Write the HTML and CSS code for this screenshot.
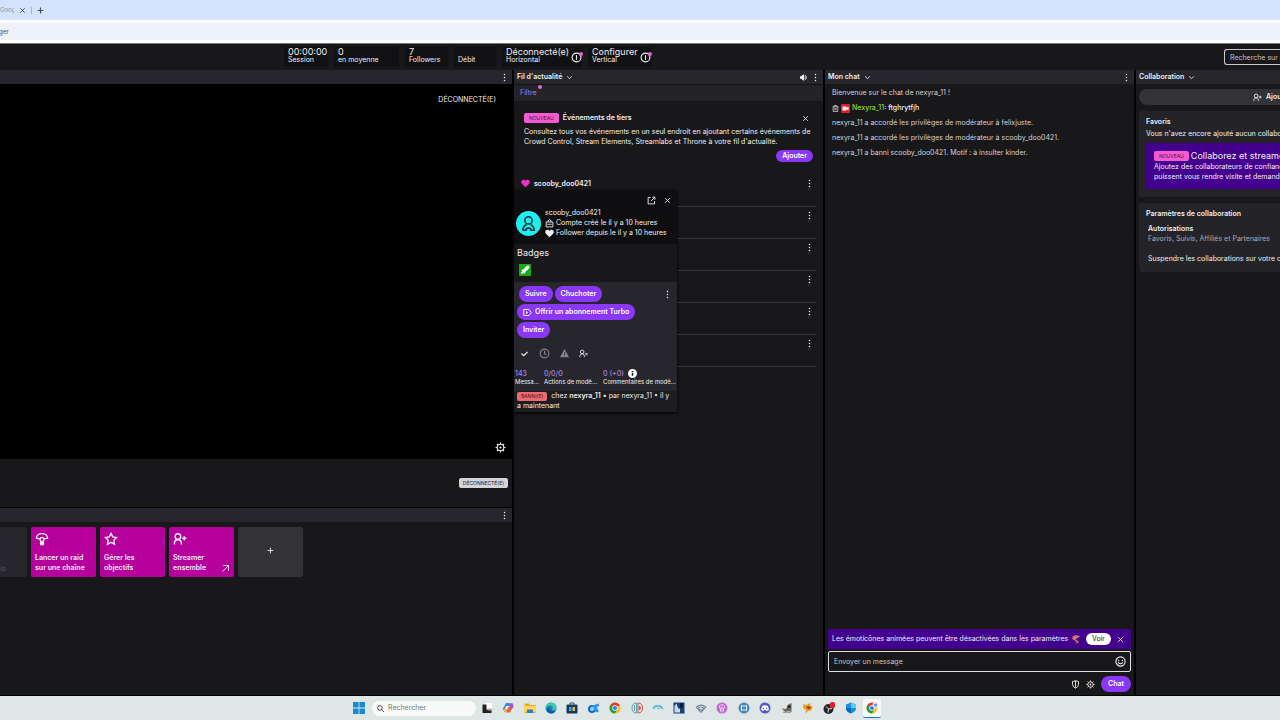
FILE: index.html
```html
<!DOCTYPE html>
<html lang="fr">

<head>
    <meta charset="utf-8">
    <title>Gestionnaire de stream</title>
    <link rel="stylesheet" href="styles.css">
</head>

<body>
    <!-- shared icons -->
    <svg class="sprite" xmlns="http://www.w3.org/2000/svg">
        <symbol id="dots" viewBox="0 0 12 12"><circle cx="6" cy="2" r="1" /><circle cx="6" cy="6" r="1" /><circle cx="6" cy="10" r="1" /></symbol>
        <symbol id="chevron" viewBox="0 0 12 12"><path d="M2 4l4 4 4-4" class="bold-s" /></symbol>
        <symbol id="close" viewBox="0 0 12 12"><path d="M2 2l8 8M10 2l-8 8" class="bold-s" /></symbol>
        <symbol id="info" viewBox="0 0 12 12"><circle cx="6" cy="6" r="4.800" class="line" /><path d="M6 3.500v5" class="line" /></symbol>
        <symbol id="gear" viewBox="0 0 20 20"><circle cx="10" cy="10" r="6" class="bold" /><circle cx="10" cy="10" r="2" /><path d="M10 1v3M10 16v3M1 10h3M16 10h3M3.600 3.600l2 2M14.400 14.400l2 2M3.600 16.400l2-2M14.400 5.600l2-2" class="bold" /></symbol>
        <symbol id="heart" viewBox="0 0 12 12"><path d="M6 11L1.200 6.200C-.8 3.500 1 1 3.200 1 4.600 1 5.500 1.800 6 2.600 6.500 1.800 7.400 1 8.800 1 11 1 12.800 3.500 10.800 6.200z" /></symbol>
        <symbol id="person-plus" viewBox="0 0 20 18"><circle cx="7" cy="5.500" r="4" class="bold" /><path d="M2 17v-2c0-3 2-5 5-5s5 2 5 5v2M13 8h6M16 5v6" class="bold" /></symbol>
        <symbol id="person-x" viewBox="0 0 20 18"><circle cx="7" cy="5.500" r="4" class="bold" /><path d="M2 17v-2c0-3 2-5 5-5s5 2 5 5v2M14 8l5 5M19 8l-5 5" class="bold" /></symbol>
        <symbol id="chrome" viewBox="0 0 24 24"><circle cx="12" cy="12" r="11" fill="#fbc116" /><path d="M12 12L2.500 6.500A11 11 0 0 1 21.500 6.500z" fill="#e33b2e" /><path d="M12 12L2.500 6.500A11 11 0 0 0 12 23l4.500-8z" fill="#229a4b" /><circle cx="12" cy="12" r="5.500" fill="#fff" /><circle cx="12" cy="12" r="4.200" fill="#3b7ded" /></symbol>
    </svg>

    <div class="browser">
        <div class="tabs">
            <span class="tab-name">Goog</span>
            <button class="tab-button" aria-label="Fermer l'onglet"><svg class="icon-s"><use href="#close" /></svg></button>
            <span class="tab-sep"></span>
            <button class="tab-button" aria-label="Nouvel onglet"><svg class="icon-s" viewBox="0 0 12 12"><path d="M6 1v10M1 6h10" class="bold" /></svg></button>
        </div>
        <div class="address"><span class="address-text">ager</span></div>
    </div>

    <div class="app">
        <header class="topbar">
            <div class="stat session"><b>00:00:00</b><span>Session</span></div>
            <div class="stat average"><b>0</b><span>en moyenne</span></div>
            <div class="stat followers"><b>7</b><span>Followers</span></div>
            <div class="stat bitrate"><b></b><span>Débit</span></div>
            <div class="stat status horizontal">
                <div><b>Déconnecté(e)</b><span>Horizontal</span></div>
                <i class="notice"><svg class="icon-l"><use href="#info" /></svg></i>
            </div>
            <div class="stat status vertical">
                <div><b>Configurer</b><span>Vertical</span></div>
                <i class="notice"><svg class="icon-l"><use href="#info" /></svg></i>
            </div>
            <input class="search" type="text" aria-label="Recherche" placeholder="Recherche sur le site">
        </header>

        <main class="columns">
            <section class="column">
                <div class="column-head">
                    <button class="icon-button push" aria-label="Options"><svg class="icon-m"><use href="#dots" /></svg></button>
                </div>
                <div class="video">
                    <span class="video-status">DÉCONNECTÉ(E)</span>
                    <button class="icon-button" aria-label="Paramètres"><svg class="icon-l"><use href="#gear" /></svg></button>
                </div>
                <div class="stream-info"><span class="offline">DÉCONNECTÉ(E)</span></div>
                <div class="quick">
                    <div class="column-head">
                        <button class="icon-button push" aria-label="Options"><svg class="icon-m"><use href="#dots" /></svg></button>
                    </div>
                    <div class="tiles">
                        <button class="tile tile-off" disabled>Clip</button>
                        <button class="tile">
                            <svg class="tile-icon" viewBox="0 0 20 20"><path d="M2 9c0-9 16-9 16 0l-5 1c-1-3-5-3-6 0zM7 10l1.500 4M13 10l-1.500 4" class="bold" /><path d="M7 13h6v6H7z" /></svg>
                            Lancer un raid<br>sur une chaîne
                        </button>
                        <button class="tile">
                            <svg class="tile-icon" viewBox="0 0 20 20"><path d="M10 2l2.500 5 5.500.8-4 4 1 5.700-5-2.700-5 2.700 1-5.700-4-4L7.500 7z" class="bold" /></svg>
                            Gérer les<br>objectifs
                        </button>
                        <button class="tile">
                            <svg class="tile-icon"><use href="#person-plus" /></svg>
                            Streamer<br>ensemble
                            <svg class="tile-arrow" viewBox="0 0 12 12"><path d="M2 10l8-8M3 2h7v7" class="line" /></svg>
                        </button>
                        <button class="tile tile-add" aria-label="Ajouter"><svg class="icon-s" viewBox="0 0 12 12"><path d="M6 1v10M1 6h10" class="bold-s" /></svg></button>
                    </div>
                </div>
            </section>

            <section class="column feed">
                <div class="column-head">
                    <h2>Fil d'actualité</h2>
                    <svg class="icon-s"><use href="#chevron" /></svg>
                    <button class="icon-button push" aria-label="Son"><svg class="icon-s" viewBox="0 0 12 12"><path d="M0 4h2l5-4v12L2 8H0z" /><path d="M8.500 4q1.500 2 0 4M9.500 2q3 4 0 8" class="bold-s" /></svg></button>
                    <button class="icon-button" aria-label="Options"><svg class="icon-m"><use href="#dots" /></svg></button>
                </div>
                <div class="filter"><a href="#" class="filter-link">Filtre</a></div>
                <article class="promo">
                    <div class="promo-head">
                        <span class="new">NOUVEAU</span>
                        <h3>Événements de tiers</h3>
                        <button class="icon-button push" aria-label="Fermer"><svg class="icon-s"><use href="#close" /></svg></button>
                    </div>
                    <p>Consultez tous vos événements en un seul endroit en ajoutant certains événements de Crowd Control, Stream Elements, Streamlabs et Throne à votre fil d'actualité.</p>
                    <button class="pill promo-add">Ajouter</button>
                </article>
                <ul class="events">
                    <li><svg class="icon-m pink"><use href="#heart" /></svg><b>scooby_doo0421</b><button class="icon-button push" aria-label="Options"><svg class="icon-m"><use href="#dots" /></svg></button></li>
                    <li><button class="icon-button push" aria-label="Options"><svg class="icon-m"><use href="#dots" /></svg></button></li>
                    <li><button class="icon-button push" aria-label="Options"><svg class="icon-m"><use href="#dots" /></svg></button></li>
                    <li><button class="icon-button push" aria-label="Options"><svg class="icon-m"><use href="#dots" /></svg></button></li>
                    <li><button class="icon-button push" aria-label="Options"><svg class="icon-m"><use href="#dots" /></svg></button></li>
                    <li><button class="icon-button push" aria-label="Options"><svg class="icon-m"><use href="#dots" /></svg></button></li>
                </ul>

                <div class="card">
                    <div class="card-top">
                        <div class="card-tools">
                            <button class="icon-button" aria-label="Détacher"><svg class="icon-m" viewBox="0 0 12 12"><path d="M5 2H1.500v8.500H10V7M5 7l5.500-5.500M7 1.500h3.500V5" class="line" /></svg></button>
                            <button class="icon-button" aria-label="Fermer"><svg class="icon-s"><use href="#close" /></svg></button>
                        </div>
                        <div class="card-user">
                            <svg class="avatar" viewBox="0 0 24 24"><circle cx="12" cy="12" r="12" fill="#1eeeee" /><g fill="none" stroke="#123438" stroke-width="1.500"><circle cx="12" cy="9" r="3.500" /><path d="M6.500 18.500h3c0-3 5-3 5 0h3c0-2-1-4-3.500-5.500M6.500 18.500c0-2 1-4 3.500-5.500" /></g></svg>
                            <div>
                                <b>scooby_doo0421</b>
                                <span><svg class="icon-m" viewBox="0 0 12 12"><path d="M1.500 4h9v6.500h-9zM4 4V2q2-2 4 0v2M3 7h6" class="line" /></svg>Compte créé le il y a 10 heures</span>
                                <span><svg class="icon-m"><use href="#heart" /></svg>Follower depuis le il y a 10 heures</span>
                            </div>
                        </div>
                    </div>
                    <div class="badges">
                        <h3>Badges</h3>
                        <svg class="badge" viewBox="0 0 18 18"><rect width="18" height="18" rx="1" fill="#12ad12" /><path d="M15.500 2.500v4L9 12l1 1-1.500 1.500L7 13l-2.500 2.500-2-2L5 11l-1.500-1.500L5 8l1 1 5.500-6.500z" fill="#fff" /></svg>
                    </div>
                    <div class="card-actions">
                        <div class="pills">
                            <button class="pill indent">Suivre</button>
                            <button class="pill">Chuchoter</button>
                            <button class="icon-button push" aria-label="Options"><svg class="icon-m"><use href="#dots" /></svg></button>
                        </div>
                        <button class="pill"><svg class="icon-m" viewBox="0 0 12 12"><path d="M1 2h7l3 4-3 4H1z" class="line" /><path d="M4 4v4l3-2z" /></svg>Offrir un abonnement Turbo</button>
                        <button class="pill">Inviter</button>
                        <div class="mod-icons">
                            <button class="icon-button" aria-label="Débannir"><svg class="icon-m" viewBox="0 0 12 12"><path d="M2 6l3 3 5-5" class="bold-s" /></svg></button>
                            <button class="icon-button dim" aria-label="Exclure"><svg class="icon-l" viewBox="0 0 12 12"><circle cx="6" cy="6" r="4.800" class="line" /><path d="M6 3v3l2 1.500" class="line" /></svg></button>
                            <button class="icon-button dim" aria-label="Avertir"><svg class="icon-m" viewBox="0 0 12 12"><path fill-rule="evenodd" d="M6 0l6 11H0zM5.500 4v4h1V4zM5.500 9v1h1V9z" /></svg></button>
                            <button class="icon-button" aria-label="Bloquer"><svg class="icon-m"><use href="#person-x" /></svg></button>
                        </div>
                        <div class="counts">
                            <div><a href="#">143</a><span>Messages</span></div>
                            <div><a href="#">0/0/0</a><span>Actions de modération</span></div>
                            <div><a href="#">0 (+0)<svg class="round-info" viewBox="0 0 12 12"><circle cx="6" cy="6" r="6" fill="#fff" /><path d="M5 2.500h2v1.500H5zM5 5h2v4H5z" fill="#18181b" /></svg></a><span>Commentaires de modération</span></div>
                        </div>
                        <p class="ban"><span class="banned">BANNI(E)</span>chez <b>nexyra_11</b> • par nexyra_11 • il y a maintenant</p>
                    </div>
                </div>
            </section>

            <section class="column chat">
                <div class="column-head">
                    <h2>Mon chat</h2>
                    <svg class="icon-s"><use href="#chevron" /></svg>
                    <button class="icon-button push" aria-label="Options"><svg class="icon-m"><use href="#dots" /></svg></button>
                </div>
                <div class="messages">
                    <p>Bienvenue sur le chat de nexyra_11 !</p>
                    <p class="message">
                        <svg class="icon-s" viewBox="0 0 12 12"><path d="M1 3h10M4 3V1h4v2M2 3v8h8V3M5 5v4M7 5v4" class="line" /></svg>
                        <svg class="host" viewBox="0 0 18 18"><rect width="18" height="18" rx="2" fill="#e9192d" /><path d="M3 5h8v3l4-3v8l-4-3v3H3z" fill="#fff" /></svg>
                        <span><b class="green">Nexyra_11</b>: ftghrytfjh</span>
                    </p>
                    <p>nexyra_11 a accordé les privilèges de modérateur à felixjuste.</p>
                    <p>nexyra_11 a accordé les privilèges de modérateur à scooby_doo0421.</p>
                    <p>nexyra_11 a banni scooby_doo0421. Motif : à insulter kinder.</p>
                </div>
                <div class="compose">
                    <div class="tip">
                        <span>Les émoticônes animées peuvent être désactivées dans les paramètres</span>
                        <svg class="icon-m" viewBox="0 0 12 12"><path d="M2 3q4-3 8-1L7 4 5 3v3l4 3-2 2M4 6l-2-2" fill="none" stroke="#d98463" stroke-width="2" /><path d="M6 8l2 3" stroke="#8d432c" stroke-width="2" /></svg>
                        <button class="see">Voir</button>
                        <button class="icon-button" aria-label="Fermer"><svg class="icon-s"><use href="#close" /></svg></button>
                    </div>
                    <div class="field">
                        <input type="text" aria-label="Message" placeholder="Envoyer un message">
                        <button class="icon-button" aria-label="Émoticônes"><svg class="icon-l" viewBox="0 0 12 12"><circle cx="6" cy="6" r="5" class="line" /><circle cx="4" cy="5" r=".8" /><circle cx="8" cy="5" r=".8" /><path d="M3.500 7q2.500 3 5 0" class="line" /></svg></button>
                    </div>
                    <div class="chat-buttons">
                        <button class="icon-button" aria-label="Modération"><svg class="icon-m" viewBox="0 0 12 12"><path d="M6 1L2 2v4q0 3 4 5 4-2 4-5V2zM6 1v9" class="line" /></svg></button>
                        <button class="icon-button" aria-label="Paramètres du chat"><svg class="icon-m"><use href="#gear" /></svg></button>
                        <button class="pill send">Chat</button>
                    </div>
                </div>
            </section>

            <section class="column collab">
                <div class="column-head">
                    <h2>Collaboration</h2>
                    <svg class="icon-s"><use href="#chevron" /></svg>
                </div>
                <div class="collab-body">
                    <button class="add-friend"><svg class="icon-m"><use href="#person-plus" /></svg>Ajouter</button>
                    <div class="box favorites">
                        <h3>Favoris</h3>
                        <p>Vous n'avez encore ajouté aucun collaborateur</p>
                        <div class="banner">
                            <div><span class="new">NOUVEAU</span><b>Collaborez et streamez</b></div>
                            <p>Ajoutez des collaborateurs de confiance qui<br>puissent vous rendre visite et demander à</p>
                        </div>
                    </div>
                    <div class="box settings">
                        <h3>Paramètres de collaboration</h3>
                        <h4>Autorisations</h4>
                        <p class="muted">Favoris, Suivis, Affiliés et Partenaires</p>
                        <p class="suspend">Suspendre les collaborations sur votre chaîne</p>
                    </div>
                </div>
            </section>
        </main>
    </div>

    <footer class="taskbar">
        <button class="start" aria-label="Démarrer"><svg viewBox="0 0 12 12"><path d="M0 0h5.600v5.600H0zM6.400 0H12v5.600H6.400zM0 6.400h5.600V12H0zM6.400 6.400H12V12H6.400z" fill="#168bd2" /></svg></button>
        <div class="task-search">
            <svg class="icon-s" viewBox="0 0 12 12"><circle cx="5" cy="5" r="4" class="bold-s" /><path d="M8 8l4 4" class="bold-s" /></svg>
            <input type="text" aria-label="Rechercher" placeholder="Rechercher">
        </div>
        <div class="apps">
            <svg viewBox="0 0 24 24"><path d="M8 2h14v14H8z" fill="#fff" /><path d="M3 5h8v10h10v7H3z" fill="#222" /><path d="M13 13h8v4h-8z" fill="#aaa" /></svg>
            <svg viewBox="0 0 24 24"><path d="M8 2h7l2 6H8l-3 8-4-1z" fill="#2e8fd8" /><path d="M16 3h5l2 7-5 6h-4z" fill="#db4e96" /><path d="M3 14h8l-2 7-5-1z" fill="#eeb13b" /><path d="M10 17l3-7h8l-5 11H9z" fill="#e9594f" /><path d="M15 3h6l2 6-4 5z" fill="#9c53d5" /></svg>
            <svg viewBox="0 0 24 24"><path d="M1 3h9l2 3h11v16H1z" fill="#e9a71c" /><path d="M1 8h22v12H1z" fill="#ffd75b" /><path d="M6 15h12v7H6z" fill="#2782cb" /></svg>
            <svg viewBox="0 0 24 24"><circle cx="12" cy="12" r="11" fill="#167ac6" /><path d="M2 8C6-2 23-1 23 12q-1 6-9 4 4-9-4-9-5 0-8 6z" fill="#40c7a3" /><path d="M9 11q-3 9 12 8-8 8-16 0-3-7 4-8z" fill="#1054a7" /></svg>
            <svg viewBox="0 0 24 24"><path d="M8 5V2h8v3" fill="none" stroke="#274c6d" stroke-width="2" /><rect x="1" y="5" width="22" height="18" rx="2" fill="#173955" /><path d="M6 10h5v8H6z" fill="#36a7e9" /><path d="M13 10h5v8h-5z" fill="#e5ba42" /></svg>
            <svg viewBox="0 0 24 24"><circle cx="8" cy="14" r="8" fill="#1769bd" /><path d="M6 9l14-6 3 4-6 4 5 7-4 3-8-6z" fill="#2d93e2" /><circle cx="8" cy="14" r="4" fill="#8bd3fa" /></svg>
            <svg><use href="#chrome" /></svg>
            <svg viewBox="0 0 24 24" fill="none" stroke-width="2"><path d="M11 2v20Q2 22 2 12T11 2zM7 6v12" fill="none" stroke="#5d9daa" /><path d="M14 2v20q9 0 9-10T14 2zM17 8v8q4-4 0-8" fill="none" stroke="#d34f51" /></svg>
            <svg viewBox="0 0 24 24"><path d="M1 12Q6 4 13 7q6-2 10 8-6-3-10-1-4-4-8 0z" fill="#48afd0" /><path d="M5 12l7-2 7 3" fill="none" stroke="#d4f4fa" stroke-width="2" /></svg>
            <svg viewBox="0 0 24 24"><path d="M1 1h22v22H1z" fill="#163d80" /><path d="M3 21V8l4-5 3 9 4 2v7z" fill="#c7dcf1" /><path d="M14 3h6v8h-6z" fill="#08152e" /></svg>
            <svg viewBox="0 0 24 24"><path d="M1 10q11-10 22 0L12 22z" fill="#5b7189" /><path d="M4 11q8-6 16 0M7 14q5-4 10 0M12 10v9" fill="none" stroke="#dce8ef" stroke-width="2" /></svg>
            <svg viewBox="0 0 24 24"><circle cx="12" cy="12" r="11" fill="#bd69d1" /><path d="M6 13q0-8 6-8t6 8M9 19v-7q3-4 6 0v7M12 12v9" fill="none" stroke="#f3c7f4" stroke-width="2" /></svg>
            <svg viewBox="0 0 24 24"><circle cx="12" cy="12" r="11" fill="#4a88b6" /><path d="M7 6v12M17 6v12M6 8h12M6 16h12" stroke="#dceefa" stroke-width="2" /></svg>
            <svg viewBox="0 0 24 24"><circle cx="12" cy="12" r="11" fill="#5258c9" /><path d="M6 8q6-3 12 0l2 8-5 2-1-2h-4l-1 2-5-2z" fill="#fff" /><circle cx="9" cy="13" r="1.500" fill="#5258c9" /><circle cx="15" cy="13" r="1.500" fill="#5258c9" /></svg>
            <svg viewBox="0 0 24 24"><path d="M1 13l9 1 3-8 8-4v18l-7-2-4 3z" fill="#6c6861" /><path d="M14 7h5v5h-5z" fill="#282727" /><path d="M3 19h17v3H5z" fill="#a29c91" /></svg>
            <svg viewBox="0 0 24 24"><path d="M3 4l5 2 9-4-1 5 6 3-4 7-6 1-5 5 1-7-6-4z" fill="#f19a20" /><path d="M8 10l7-2 3 4-5 3z" fill="#914c17" /></svg>
            <svg viewBox="0 0 24 24"><circle cx="11" cy="14" r="10" fill="#25262a" /><path d="M11 14l-5-5M11 14l7-1M11 14l-1 7" stroke="#ddd" stroke-width="2" /><circle cx="19" cy="6" r="6" fill="#e21b35" /></svg>
            <svg viewBox="0 0 24 24"><path d="M12 1l10 4v7q0 7-10 11Q2 19 2 12V5z" fill="#168fdd" /><path d="M12 1l10 4v7H12z" fill="#63c6f3" /><path d="M12 12v11Q2 19 2 12z" fill="#0967b8" /></svg>
            <span class="current"><svg viewBox="0 0 24 24"><use href="#chrome" /><circle cx="19" cy="6" r="6" fill="#dce7fa" /><circle cx="19" cy="6" r="3" fill="#6688d8" /></svg></span>
        </div>
    </footer>
</body>

</html>
```
FILE: styles.css
```css
* {
    box-sizing: border-box;
}

body {
    margin: 0;
    height: 100vh;
    display: flex;
    flex-direction: column;
    overflow: hidden;
    background: #000;
    color: #efeff1;
    font: 7px/10px Inter, "Liberation Sans", sans-serif;
}

h2,
h3,
h4,
p,
ul {
    margin: 0;
    padding: 0;
    font-size: 7px;
}

button,
input {
    font: inherit;
    color: inherit;
    border: 0;
    padding: 0;
    background: none;
}

input {
    outline: 0;
    min-width: 0;
}

a {
    color: #a684e8;
    text-decoration: none;
}

svg {
    fill: currentColor;
    flex: none;
}

.sprite {
    display: none;
}

.line,
.bold,
.bold-s {
    fill: none;
    stroke: currentColor;
    stroke-width: 1.2;
}

.bold {
    stroke-width: 2;
}

.bold-s {
    stroke-width: 1.5;
}

.icon-s {
    width: 7px;
    height: 7px;
}

.icon-m {
    width: 9px;
    height: 9px;
}

.icon-l {
    width: 11px;
    height: 11px;
}

.icon-button {
    display: flex;
}

.push {
    margin-left: auto;
}

/* browser chrome */
.browser {
    flex: none;
    background: #fff;
    color: #4a4f57;
    border-bottom: 1px solid #777;
}

.tabs {
    height: 20px;
    display: flex;
    align-items: center;
    gap: 5px;
    background: #d3e3fd;
}

.tab-name {
    width: 14px;
    overflow: hidden;
    color: #8993a3;
    font-size: 6px;
}

.tab-button {
    display: flex;
}

.tab-sep {
    width: 1px;
    height: 7px;
    background: #a8b8d0;
}

.address {
    display: flex;
    align-items: center;
    height: 17px;
    margin: 3px 0;
    background: #edf2fa;
    font-size: 6px;
}

.address-text {
    margin-left: -4px;
}

/* top bar */
.app {
    flex: 1;
    min-height: 0;
    display: flex;
    flex-direction: column;
}

.topbar {
    height: 26px;
    flex: none;
    display: flex;
    align-items: center;
    gap: 6px;
    padding-left: 284px;
    background: #18181b;
}

.stat {
    height: 20px;
    padding: 0 4px;
    background: #111113;
    white-space: nowrap;
}

.stat b,
.stat span {
    display: block;
    height: 8px;
    line-height: 8px;
}

.stat b {
    font-size: 9px;
    font-weight: 400;
    height: 9px;
    line-height: 9px;
}

.session {
    width: 44px;
}

.average {
    width: 65px;
}

.followers {
    width: 43px;
}

.bitrate {
    width: 42px;
}

.status {
    display: flex;
    gap: 2px;
}

.horizontal {
    width: 80px;
}

.vertical {
    width: 64px;
}

.notice {
    position: relative;
    display: flex;
    align-self: center;
}

.notice::after,
.filter-link::after {
    content: "";
    position: absolute;
    top: 0;
    right: -1px;
    width: 4px;
    height: 4px;
    border-radius: 50%;
    background: #e765d6;
}

.filter-link::after {
    top: -3px;
}

.search {
    width: 56px;
    height: 16px;
    margin-left: auto;
    padding-left: 5px;
    border: 1px solid #c8c8cc;
    border-right: 0;
    border-radius: 3px 0 0 3px;
}

input::placeholder {
    color: #c4c4cc;
    opacity: 1;
}

/* columns */
.columns {
    flex: 1;
    min-height: 0;
    display: grid;
    grid-template-columns: minmax(0, 512fr) minmax(0, 309fr) minmax(0, 309fr) minmax(0, 144fr);
    gap: 2px;
    padding-bottom: 1px;
}

.column {
    position: relative;
    min-height: 0;
    display: flex;
    flex-direction: column;
    overflow: hidden;
    background: #18181b;
}

.column-head {
    height: 14px;
    flex: none;
    display: flex;
    align-items: center;
    gap: 4px;
    padding: 0 3px;
    background: #26262c;
}

.column-head h2 {
    font-weight: 600;
}

.video {
    flex: 1;
    display: flex;
    flex-direction: column;
    align-items: flex-end;
    justify-content: space-between;
    padding: 11px 6px 6px;
    background: #000;
}

.video-status {
    padding-right: 10px;
}

.stream-info {
    height: 48px;
    display: flex;
    align-items: center;
    justify-content: flex-end;
    padding-right: 4px;
}

.offline {
    padding: 0 4px;
    border-radius: 2px;
    background: #d3d3d9;
    color: #222;
    font-size: 5px;
}

.quick {
    height: 188px;
    border-top: 1px solid #000;
}

.tiles {
    display: flex;
    gap: 4px;
    margin: 5px 0 0 -38px;
}

.tile {
    position: relative;
    width: 65px;
    height: 50px;
    flex: none;
    padding: 5px 4px;
    border-radius: 2px;
    background: #b5009e;
    text-align: left;
    font-weight: 600;
}

.tile-icon {
    display: block;
    width: 14px;
    height: 14px;
    margin-bottom: 7px;
}

.tile-arrow {
    position: absolute;
    right: 4px;
    bottom: 4px;
    width: 9px;
    height: 9px;
}

.tile-off {
    padding: 33px 21px 0 0;
    background: #26262c;
    color: #515159;
    text-align: right;
    font-weight: 400;
}

.tile-add {
    background: #323237;
    text-align: center;
}

/* activity feed */
.filter {
    height: 17px;
    flex: none;
    padding: 3px 6px;
    background: #232328;
    border-top: 1px solid #111;
}

.filter-link {
    position: relative;
    padding-right: 4px;
}

.promo {
    margin: 8px 0 0;
    padding: 4px 10px 5px;
}

.promo-head {
    display: flex;
    align-items: center;
    gap: 4px;
    margin-bottom: 4px;
}

.promo-head h3 {
    font-weight: 600;
}

.promo-head .push {
    margin-right: 4px;
}

.new {
    padding: 0 5px;
    border-radius: 2px;
    background: #f45bd3;
    color: #4b1242;
    font-size: 5px;
}

.pill {
    display: flex;
    align-items: center;
    gap: 3px;
    width: max-content;
    height: 16px;
    padding: 0 6px;
    border-radius: 8px;
    background: #8a38f5;
    color: #fff;
    font-weight: 600;
}

.promo-add {
    height: 12px;
    margin: 3px 0 0 auto;
}

.events {
    list-style: none;
    margin: 8px 7px 0;
}

.events li {
    height: 32px;
    display: flex;
    align-items: flex-start;
    gap: 4px;
    padding: 4px 2px 0 0;
    border-bottom: 1px solid #35353b;
}

.events b {
    font-weight: 600;
}

.pink {
    color: #ed30c5;
}

/* user card floating above the feed */
.card {
    position: absolute;
    top: 120px;
    left: 0;
    width: 163px;
    background: #18181b;
    box-shadow: 0 1px 3px #000;
}

.card-top {
    height: 54px;
    padding: 6px 6px 0 2px;
    background: #0e0e10;
}

.card-tools {
    display: flex;
    align-items: center;
    justify-content: flex-end;
    gap: 8px;
}

.card-user {
    display: flex;
    align-items: center;
    gap: 4px;
    margin-top: 3px;
}

.card-user b,
.card-user span {
    display: flex;
    align-items: center;
    gap: 2px;
    font-weight: 400;
}

.avatar {
    width: 25px;
    height: 25px;
}

.badges {
    height: 38px;
    padding: 4px 3px;
}

.badges h3 {
    font-size: 9px;
    font-weight: 400;
}

.badge {
    width: 12px;
    height: 12px;
    margin: 6px 2px;
}

.card-actions {
    display: flex;
    flex-direction: column;
    gap: 2px;
    padding: 4px 3px 0;
    background: #26262c;
}

.pills {
    display: flex;
    align-items: center;
    gap: 2px;
}

.pills .push {
    margin-right: 2px;
}

.pills .indent {
    margin-left: 2px;
}

.mod-icons {
    display: flex;
    align-items: center;
    gap: 10px;
    height: 18px;
    margin: 4px 3px 0;
}

.dim {
    color: #85858d;
}

.counts {
    display: grid;
    grid-template-columns: 24px 54px 74px;
    gap: 5px;
    margin: 5px -2px 3px;
}

.counts div {
    min-width: 0;
}

.counts a {
    display: flex;
    align-items: center;
    gap: 4px;
    height: 9px;
    font-weight: 500;
}

.counts span {
    display: block;
    overflow: hidden;
    text-overflow: ellipsis;
    white-space: nowrap;
    font-size: 6px;
    line-height: 8px;
}

.round-info {
    width: 9px;
    height: 9px;
}

.ban {
    margin: 0 -3px;
    padding: 0 3px 1px;
    background: #1d1d21;
}

.ban b {
    font-weight: 600;
}

.banned {
    display: inline-block;
    margin-right: 4px;
    padding: 0 4px;
    border-radius: 2px;
    background: #ed6a70;
    color: #46151a;
    font-size: 5px;
    line-height: 9px;
}

/* chat */
.messages {
    flex: 1;
    display: flex;
    flex-direction: column;
    gap: 5px;
    padding: 4px 7px;
    color: #d3d3d9;
}

.message {
    display: flex;
    align-items: center;
    gap: 2px;
    color: #efeff1;
    font-weight: 500;
}

.host {
    width: 9px;
    height: 9px;
}

.green {
    color: #8ad92c;
    font-weight: 500;
}

.compose {
    padding: 0 3px 3px;
}

.tip {
    height: 20px;
    display: flex;
    align-items: center;
    gap: 3px;
    padding: 0 7px 0 4px;
    background: #43008f;
    white-space: nowrap;
}

.see {
    height: 12px;
    margin: 0 3px 0 auto;
    padding: 0 6px;
    border-radius: 6px;
    background: #fff;
    color: #222;
}

.field {
    height: 21px;
    display: flex;
    align-items: center;
    margin: 2px 0 4px;
    padding: 0 4px 0 5px;
    border: 1px solid #dedee3;
    border-radius: 2px;
}

.field input {
    flex: 1;
}

.chat-buttons {
    display: flex;
    align-items: center;
    justify-content: flex-end;
    gap: 6px;
}

.send {
    padding: 0 7px;
}

/* collaboration */
.collab-body {
    display: flex;
    flex-direction: column;
    gap: 6px;
    padding: 5px 0 0 3px;
    white-space: nowrap;
}

.add-friend {
    height: 16px;
    display: flex;
    align-items: center;
    gap: 4px;
    padding-left: 114px;
    border-radius: 8px 0 0 8px;
    background: #323237;
    font-weight: 600;
}

.box {
    padding: 6px 0 8px 7px;
    border-radius: 3px 0 0 3px;
    background: #232328;
}

.box h3,
.box h4 {
    font-weight: 600;
}

.favorites h3 {
    margin-bottom: 2px;
}

.banner {
    margin-top: 4px;
    padding: 8px 0 7px 8px;
    background: #43008f;
}

.banner div {
    display: flex;
    align-items: center;
    gap: 2px;
    margin-bottom: 1px;
}

.banner b {
    font-size: 9px;
    font-weight: 400;
}

.settings h4 {
    margin: 5px 0 0 2px;
}

.settings p {
    margin-left: 2px;
}

.muted {
    color: #adadb8;
}

.settings .suspend {
    margin-top: 10px;
}

/* windows task bar */
.taskbar {
    height: 24px;
    flex: none;
    display: flex;
    align-items: center;
    padding-left: 353px;
    background: #dfe6e6;
    color: #333;
}

.start {
    display: flex;
    width: 12px;
    height: 12px;
}

.task-search {
    width: 104px;
    height: 15px;
    display: flex;
    align-items: center;
    gap: 4px;
    margin-left: 7px;
    padding-left: 5px;
    border-radius: 8px;
    background: #f8fafa;
}

.task-search input {
    flex: 1;
}

.task-search input::placeholder {
    color: #777;
}

.apps {
    width: 407px;
    display: grid;
    grid-template-columns: repeat(19, 1fr);
    align-items: center;
    justify-items: center;
}

.apps svg {
    width: 12px;
    height: 12px;
}

.current {
    display: flex;
    padding: 3px;
    border-radius: 2px;
    background: #f5f8f8;
    border-bottom: 1px solid #1778c4;
}
```
